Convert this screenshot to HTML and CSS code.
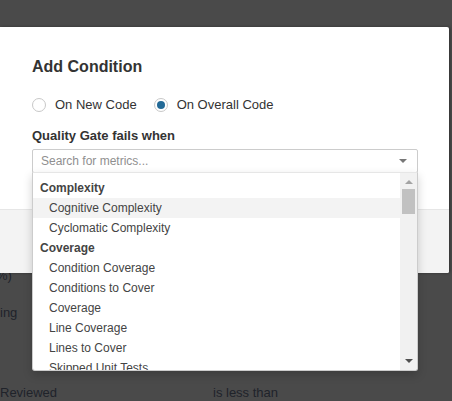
FILE: index.html
```html
<!DOCTYPE html>
<html>
<head>
<meta charset="utf-8">
<link rel="stylesheet" href="styles.css">
</head>
<body>
<div class="page">
  <div class="prow r1"><span class="clip">%)</span></div>
  <div class="prow r2"><span>ing</span></div>
  <div class="prow r3"><span class="c1">Reviewed</span><span class="c2">is less than</span></div>
</div>
<div class="overlay">
  <div class="modal">
    <div class="modal-body">
      <h2 class="title">Add Condition</h2>
      <div class="radios">
        <label class="radio-opt"><span class="radio"></span><span>On New Code</span></label>
        <label class="radio-opt"><span class="radio checked"><span class="dot"></span></span><span>On Overall Code</span></label>
      </div>
      <div class="field-label">Quality Gate fails when</div>
      <div class="select">
        <div class="select-input">
          <span class="placeholder">Search for metrics...</span>
          <span class="caret"></span>
        </div>
        <div class="menu">
          <div class="options">
            <div class="group">Complexity</div>
            <div class="opt focused">Cognitive Complexity</div>
            <div class="opt">Cyclomatic Complexity</div>
            <div class="group">Coverage</div>
            <div class="opt">Condition Coverage</div>
            <div class="opt">Conditions to Cover</div>
            <div class="opt">Coverage</div>
            <div class="opt">Line Coverage</div>
            <div class="opt">Lines to Cover</div>
            <div class="opt">Skipped Unit Tests</div>
            <div class="opt">Uncovered Conditions</div>
          </div>
          <div class="scrollbar">
            <span class="arrow up"></span>
            <span class="thumb"></span>
            <span class="track"></span>
            <span class="arrow down"></span>
          </div>
        </div>
      </div>
    </div>
    <div class="modal-footer"></div>
  </div>
</div>
</body>
</html>
```

FILE: styles.css
```css
html, body {
  margin: 0;
  padding: 0;
}
body {
  width: 452px;
  height: 401px;
  overflow: hidden;
  background: #4a4a4a;
  font-family: "Liberation Sans", Arial, sans-serif;
  position: relative;
}
.page {
  padding-top: 266px;
  color: #20232a;
  font-size: 13px;
  line-height: 20px;
}
.prow {
  display: flex;
}
.r1 { height: 37px; }
.r2 { height: 80px; }
.r3 { height: 20px; }
.clip { margin-left: -4px; }
.c1 { width: 213px; flex-shrink: 0; }

.overlay {
  position: absolute;
  left: 0;
  top: 0;
  width: 452px;
  height: 401px;
}
.modal {
  margin-top: 27px;
  width: 449px;
  background: #fff;
  border-radius: 0 2px 2px 0;
  box-shadow: 1px 0 3px rgba(0, 0, 0, 0.35);
}
.modal-body {
  padding: 28px 32px 0 32px;
  height: 154px;
  color: #333;
}
.title {
  margin: 0;
  font-size: 16px;
  line-height: 24px;
  font-weight: bold;
  color: #333;
}
.radios {
  margin-top: 16px;
  display: flex;
  height: 20px;
  align-items: center;
  font-size: 13px;
  line-height: 20px;
}
.radio-opt {
  display: flex;
  align-items: center;
  margin-right: 17px;
}
.radio {
  box-sizing: border-box;
  width: 14px;
  height: 14px;
  margin-right: 9px;
  border: 1px solid #c8c8c8;
  border-radius: 50%;
  background: #fff;
  display: flex;
  align-items: center;
  justify-content: center;
}
.dot {
  width: 8px;
  height: 8px;
  border-radius: 50%;
  background: #236a97;
}
.field-label {
  margin-top: 11px;
  font-size: 13px;
  line-height: 20px;
  font-weight: bold;
  color: #333;
  margin-bottom: 3px;
}
.select {
  position: relative;
  width: 386px;
  font-size: 12px;
}
.select-input {
  box-sizing: border-box;
  height: 24px;
  border: 1px solid #ccc;
  border-radius: 2px;
  display: flex;
  align-items: center;
  justify-content: space-between;
  padding: 0 10px 0 8px;
  background: #fff;
}
.placeholder {
  color: #8f8f8f;
  line-height: 22px;
}
.caret {
  width: 0;
  height: 0;
  border-left: 4px solid transparent;
  border-right: 4px solid transparent;
  border-top: 4px solid #777;
}
.menu {
  position: absolute;
  left: 0;
  top: 23px;
  box-sizing: border-box;
  width: 386px;
  height: 199px;
  border: 1px solid #ccc;
  border-top-color: #e6e6e6;
  border-radius: 0 0 3px 3px;
  background: #fff;
  box-shadow: 0 4px 10px rgba(0, 0, 0, 0.18);
  display: flex;
  overflow: hidden;
  z-index: 2;
}
.options {
  flex: 1;
  padding-top: 5px;
  overflow: hidden;
  color: #444;
  line-height: 20px;
}
.group {
  padding-left: 7px;
  font-weight: bold;
  color: #444;
}
.opt {
  padding-left: 16px;
  color: #444;
}
.opt.focused {
  background: #f3f3f3;
}
.scrollbar {
  width: 17px;
  background: #f1f1f1;
  display: flex;
  flex-direction: column;
  align-items: center;
}
.arrow {
  width: 0;
  height: 0;
  border-left: 4px solid transparent;
  border-right: 4px solid transparent;
}
.arrow.up {
  margin-top: 7px;
  border-bottom: 4px solid #a3a3a3;
}
.thumb {
  margin-top: 5px;
  width: 13px;
  height: 25px;
  background: #c1c1c1;
}
.track {
  flex: 1;
}
.arrow.down {
  margin-bottom: 7px;
  border-top: 4px solid #505050;
}
.modal-footer {
  height: 63px;
  border-top: 1px solid #e6e6e6;
  background: #f3f3f3;
  border-radius: 0 0 2px 0;
}
```
